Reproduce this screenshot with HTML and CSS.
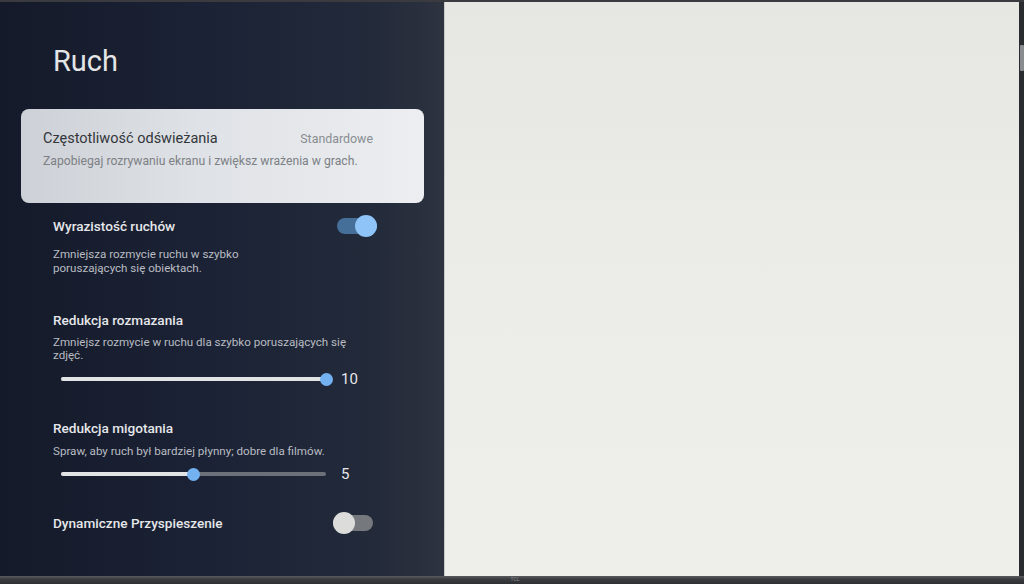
FILE: index.html
```html
<!DOCTYPE html>
<html lang="pl">
<head>
<meta charset="utf-8">
<link rel="stylesheet" href="styles.css">
</head>
<body>
<div class="tv">
  <div class="screen">
    <div class="panel">
      <h1 class="title">Ruch</h1>
      <div class="card">
        <div class="card-row">
          <span class="card-title">Częstotliwość odświeżania</span>
          <span class="card-value">Standardowe</span>
        </div>
        <div class="card-desc">Zapobiegaj rozrywaniu ekranu i zwiększ wrażenia w grach.</div>
      </div>

      <div class="item item-first">
        <div class="row row-on">
          <span class="item-title">Wyrazistość ruchów</span>
          <span class="toggle on"><span class="knob"></span></span>
        </div>
        <div class="desc desc-narrow">Zmniejsza rozmycie ruchu w szybko poruszających się obiektach.</div>
      </div>

      <div class="item item-2">
        <div class="item-title">Redukcja rozmazania</div>
        <div class="desc desc-tight">Zmniejsz rozmycie w ruchu dla szybko poruszających się zdjęć.</div>
        <div class="slider-row">
          <div class="track"><div class="fill" style="width:100%"></div><span class="thumb" style="left:100%"></span></div>
          <span class="value">10</span>
        </div>
      </div>

      <div class="item item-3">
        <div class="item-title">Redukcja migotania</div>
        <div class="desc desc-one">Spraw, aby ruch był bardziej płynny; dobre dla filmów.</div>
        <div class="slider-row">
          <div class="track"><div class="fill" style="width:50%"></div><span class="thumb" style="left:50%"></span></div>
          <span class="value">5</span>
        </div>
      </div>

      <div class="item item-4">
        <div class="row row-off">
          <span class="item-title">Dynamiczne Przyspieszenie</span>
          <span class="toggle off"><span class="knob"></span></span>
        </div>
      </div>
    </div>
    <div class="preview"></div>
  </div>
  <div class="side-bezel"><span class="sensor"></span></div>
</div>
<div class="bottom-bezel"><span class="logo">TCL</span></div>
</body>
</html>
```

FILE: styles.css
```css
* { box-sizing: border-box; }
html, body { margin: 0; padding: 0; }
body {
  width: 1024px;
  height: 584px;
  overflow: hidden;
  background: #2c2d30;
  font-family: Roboto, "Noto Sans", "Liberation Sans", sans-serif;
}
.tv {
  display: flex;
  height: 576px;
  border-top: 2px solid #3a3b3f;
}
.screen {
  display: flex;
  width: 1019px;
  height: 574px;
}
.side-bezel {
  flex: 1;
  background: #2a2b2e;
  position: relative;
}
.sensor {
  position: absolute;
  left: 1px;
  top: 43px;
  width: 4px;
  height: 26px;
  background: #8a8b8e;
  border-radius: 1px;
}
.panel {
  width: 444px;
  height: 100%;
  background: linear-gradient(90deg, #141a29 0%, #1b2235 45%, #232a3a 85%, #2d333f 100%);
  padding-top: 41px;
}
.title {
  margin: 0 0 0 53px;
  font-size: 29px;
  line-height: 36px;
  font-weight: 400;
  color: #e4e5e7;
}
.card {
  margin: 30px 0 0 21px;
  width: 403px;
  height: 94px;
  border-radius: 8px;
  background: linear-gradient(90deg, #cdd0d6 0%, #dfe2e6 45%, #eceef1 100%);
  padding: 19px 51px 0 22px;
}
.card-row {
  display: flex;
  justify-content: space-between;
  align-items: center;
  height: 20px;
}
.card-title {
  font-size: 14.5px;
  color: #33363b;
}
.card-value {
  font-size: 12.4px;
  color: #8a8d92;
}
.card-desc {
  margin-top: 4px;
  font-size: 12.2px;
  line-height: 18px;
  color: #7d8085;
}
.item {
  margin-left: 53px;
  width: 326px;
}
.item-first { margin-top: 13px; }
.item-2 { margin-top: 35px; }
.item-3 { margin-top: 29px; }
.item-4 { margin-top: 29px; }
.row {
  display: flex;
  justify-content: space-between;
  align-items: center;
  height: 20px;
}
.row-on { padding-right: 2px; }
.row-off { padding-right: 6px; }
.item-title {
  font-size: 13.6px;
  line-height: 20px;
  font-weight: 500;
  color: #e6e7ea;
}
.desc {
  font-size: 11.6px;
  color: #b9bcc2;
}
.desc-narrow {
  margin-top: 11px;
  width: 220px;
  line-height: 14px;
}
.desc-tight {
  margin-top: 6px;
  width: 300px;
  line-height: 13px;
}
.desc-one {
  margin-top: 6px;
  line-height: 14px;
}
.toggle {
  position: relative;
  width: 40px;
  height: 16px;
  border-radius: 8px;
}
.toggle.on { background: #456f99; }
.toggle.off { background: #75787c; }
.knob {
  position: absolute;
  top: -3px;
  width: 22px;
  height: 22px;
  border-radius: 50%;
}
.toggle.on .knob { right: 0; background: #8ec4f7; }
.toggle.off .knob { left: 0; background: #dcdddb; }
.slider-row {
  display: flex;
  align-items: center;
  height: 20px;
  margin-top: 7px;
  padding-left: 8px;
}
.item-3 .slider-row { margin-top: 6px; }
.track {
  position: relative;
  width: 265px;
  height: 4px;
  border-radius: 2px;
  background: #6c7179;
}
.fill {
  height: 100%;
  border-radius: 2px;
  background: #e2e3e4;
}
.thumb {
  position: absolute;
  top: 50%;
  width: 13px;
  height: 13px;
  margin: -6.5px 0 0 -6.5px;
  border-radius: 50%;
  background: #74b1f0;
}
.value {
  margin-left: 15px;
  font-size: 15px;
  color: #e6e7ea;
}
.preview {
  flex: 1;
  background: linear-gradient(180deg, #e6e7e2 0%, #ecede9 50%, #eeefeb 100%);
  border-left: 1px solid #c9cac8;
}
.bottom-bezel {
  height: 8px;
  background: linear-gradient(180deg, #5a5b5f 0%, #3b3c40 40%, #2e2f32 100%);
  display: flex;
  justify-content: center;
}
.logo {
  font-size: 5px;
  line-height: 6px;
  color: #888;
  margin-left: 6px;
}
```
